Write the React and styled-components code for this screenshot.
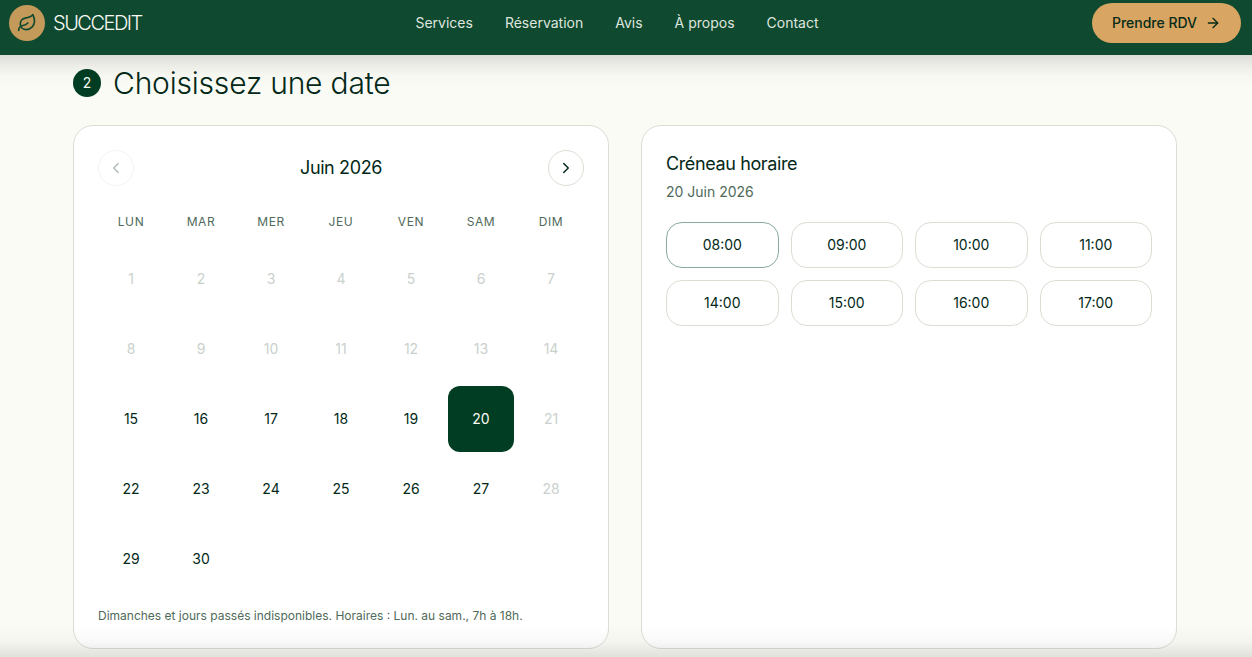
import React from "react";
import styled, { createGlobalStyle, css } from "styled-components";
import { Leaf, ArrowRight, ChevronLeft, ChevronRight } from "lucide-react";

const GlobalStyle = createGlobalStyle`
  *, *::before, *::after { box-sizing: border-box; }
  html, body { margin: 0; height: 100%; }
  body {
    background: #fafbf5;
    color: #032818;
    font-family: Inter, "Liberation Sans", sans-serif;
    overflow: hidden;
  }
  button { font: inherit; color: inherit; cursor: pointer; }
  h2, h3, p { margin: 0; }
`;

const Page = styled.div`
  height: 657px;
  overflow: hidden;
  position: relative;
`;

const Header = styled.header`
  height: 55px;
  padding: 0 11px 9px 9px;
  display: flex;
  justify-content: space-between;
  align-items: center;
  background: #0f492f;
  position: relative;
  &::after {
    content: "";
    position: absolute;
    inset: 100% 0 auto 0;
    height: 32px;
    pointer-events: none;
    background: linear-gradient(to bottom, rgba(0, 0, 0, 0.12), rgba(0, 0, 0, 0.055) 35%, rgba(0, 0, 0, 0.015) 65%, rgba(0, 0, 0, 0));
  }
`;

const Brand = styled.a`
  display: flex;
  align-items: center;
  gap: 8px;
  width: 133px;
  white-space: nowrap;
  color: #fafbf5;
  font-size: 20px;
  font-weight: 300;
  letter-spacing: -1.5px;
  line-height: 28px;
`;

const BrandMark = styled.span`
  width: 36px;
  height: 36px;
  border-radius: 50%;
  flex: none;
  display: grid;
  place-items: center;
  background: #c49a5b;
  color: #0f492f;
`;

const Nav = styled.nav`
  display: flex;
  gap: 32px;
`;

const NavLink = styled.a`
  color: #dfe6df;
  font-size: 14px;
  line-height: 20px;
`;

const BookButton = styled.button`
  width: 149px;
  height: 40px;
  display: flex;
  align-items: center;
  justify-content: center;
  gap: 8px;
  padding: 0;
  border: 0;
  border-radius: 20px;
  background: #d8a563;
  color: #062b18;
  font-size: 14px;
  line-height: 20px;
  font-weight: 500;
`;

const Main = styled.main`
  padding: 8px 75px 0 73px;
`;

const StepTitle = styled.div`
  display: flex;
  align-items: center;
  gap: 12px;
  height: 40px;
`;

const StepNumber = styled.span`
  width: 28px;
  height: 28px;
  border-radius: 50%;
  display: grid;
  place-items: center;
  background: #003d22;
  color: #fafbf5;
  font-size: 14px;
  line-height: 20px;
`;

const Title = styled.h2`
  font-size: 30px;
  font-weight: 300;
  line-height: 40px;
  letter-spacing: -0.2px;
  white-space: nowrap;
`;

const Columns = styled.div`
  display: grid;
  grid-template-columns: 1fr 1fr;
  gap: 32px;
  margin-top: 22px;
`;

const Card = styled.section`
  height: 524px;
  padding: 24px;
  border: 1px solid #d9dfd3;
  border-radius: 20px;
  background: #fff;
`;

const MonthBar = styled.div`
  display: flex;
  align-items: center;
  justify-content: space-between;
  margin-bottom: 24px;
`;

const CardTitle = styled.h3`
  font-size: 18px;
  font-weight: 400;
  line-height: 28px;
  letter-spacing: -0.38px;
`;

const RoundButton = styled.button`
  width: 36px;
  height: 36px;
  padding: 0;
  border: 1px solid #d9dfd3;
  border-radius: 50%;
  display: grid;
  place-items: center;
  background: #fff;
  &:disabled { opacity: 0.3; }
`;

const WeekGrid = styled.div`
  display: grid;
  grid-template-columns: repeat(7, 66px);
  gap: 4px;
`;

const Weekday = styled.span`
  height: 24px;
  line-height: 24px;
  margin-bottom: 8px;
  text-align: center;
  font-size: 12px;
  letter-spacing: 0.6px;
  color: #4f6a5a;
`;

const Day = styled.button`
  height: 66px;
  padding: 0;
  border: 0;
  border-radius: 12px;
  background: transparent;
  font-size: 14px;
  line-height: 20px;
  &:disabled { color: #cad1cd; }
  ${(p) => p.$selected && css`
    background: #003d22;
    color: #fafbf5;
  `}
`;

const Note = styled.p`
  margin-top: 16px;
  font-size: 12px;
  line-height: 16px;
  color: #4f6a5a;
`;

const SlotDate = styled.p`
  font-size: 14px;
  line-height: 20px;
  margin: 4px 0 20px;
  color: #4f6a5a;
`;

const Slots = styled.div`
  display: grid;
  grid-template-columns: repeat(4, 1fr);
  gap: 12px;
`;

const Slot = styled.button`
  height: 46px;
  padding: 0;
  border: 1px solid ${(p) => (p.$active ? "#8aaa9e" : "#d9dfd3")};
  border-radius: 16px;
  background: #fff;
  font-size: 14px;
  line-height: 20px;
`;

const BottomFade = styled.div`
  position: absolute;
  inset: auto 0 0 0;
  height: 32px;
  pointer-events: none;
  background: linear-gradient(to bottom, rgba(0, 0, 0, 0), rgba(0, 0, 0, 0.025) 50%, rgba(0, 0, 0, 0.1));
`;

const links = ["Services", "Réservation", "Avis", "À propos", "Contact"];
const weekdays = ["LUN", "MAR", "MER", "JEU", "VEN", "SAM", "DIM"];
const days = Array.from({ length: 30 }, (_, i) => i + 1);
const hours = ["08:00", "09:00", "10:00", "11:00", "14:00", "15:00", "16:00", "17:00"];

export default function App() {
  return (
    <Page>
      <GlobalStyle />
      <Header>
        <Brand>
          <BrandMark><Leaf size={20} strokeWidth={2} /></BrandMark>
          SUCCEDIT
        </Brand>
        <Nav>{links.map((l) => <NavLink key={l}>{l}</NavLink>)}</Nav>
        <BookButton>Prendre RDV<ArrowRight size={16} /></BookButton>
      </Header>
      <Main>
        <StepTitle>
          <StepNumber>2</StepNumber>
          <Title>Choisissez une date</Title>
        </StepTitle>
        <Columns>
          <Card>
            <MonthBar>
              <RoundButton disabled aria-label="Mois précédent"><ChevronLeft size={18} /></RoundButton>
              <CardTitle>Juin 2026</CardTitle>
              <RoundButton aria-label="Mois suivant"><ChevronRight size={18} /></RoundButton>
            </MonthBar>
            <WeekGrid>
              {weekdays.map((d) => <Weekday key={d}>{d}</Weekday>)}
              {days.map((d) => (
                <Day key={d} disabled={d < 15 || d % 7 === 0} $selected={d === 20}>{d}</Day>
              ))}
            </WeekGrid>
            <Note>Dimanches et jours passés indisponibles. Horaires : Lun. au sam., 7h à 18h.</Note>
          </Card>
          <Card>
            <CardTitle>Créneau horaire</CardTitle>
            <SlotDate>20 Juin 2026</SlotDate>
            <Slots>
              {hours.map((h, i) => <Slot key={h} $active={i === 0}>{h}</Slot>)}
            </Slots>
          </Card>
        </Columns>
      </Main>
      <BottomFade />
    </Page>
  );
}
